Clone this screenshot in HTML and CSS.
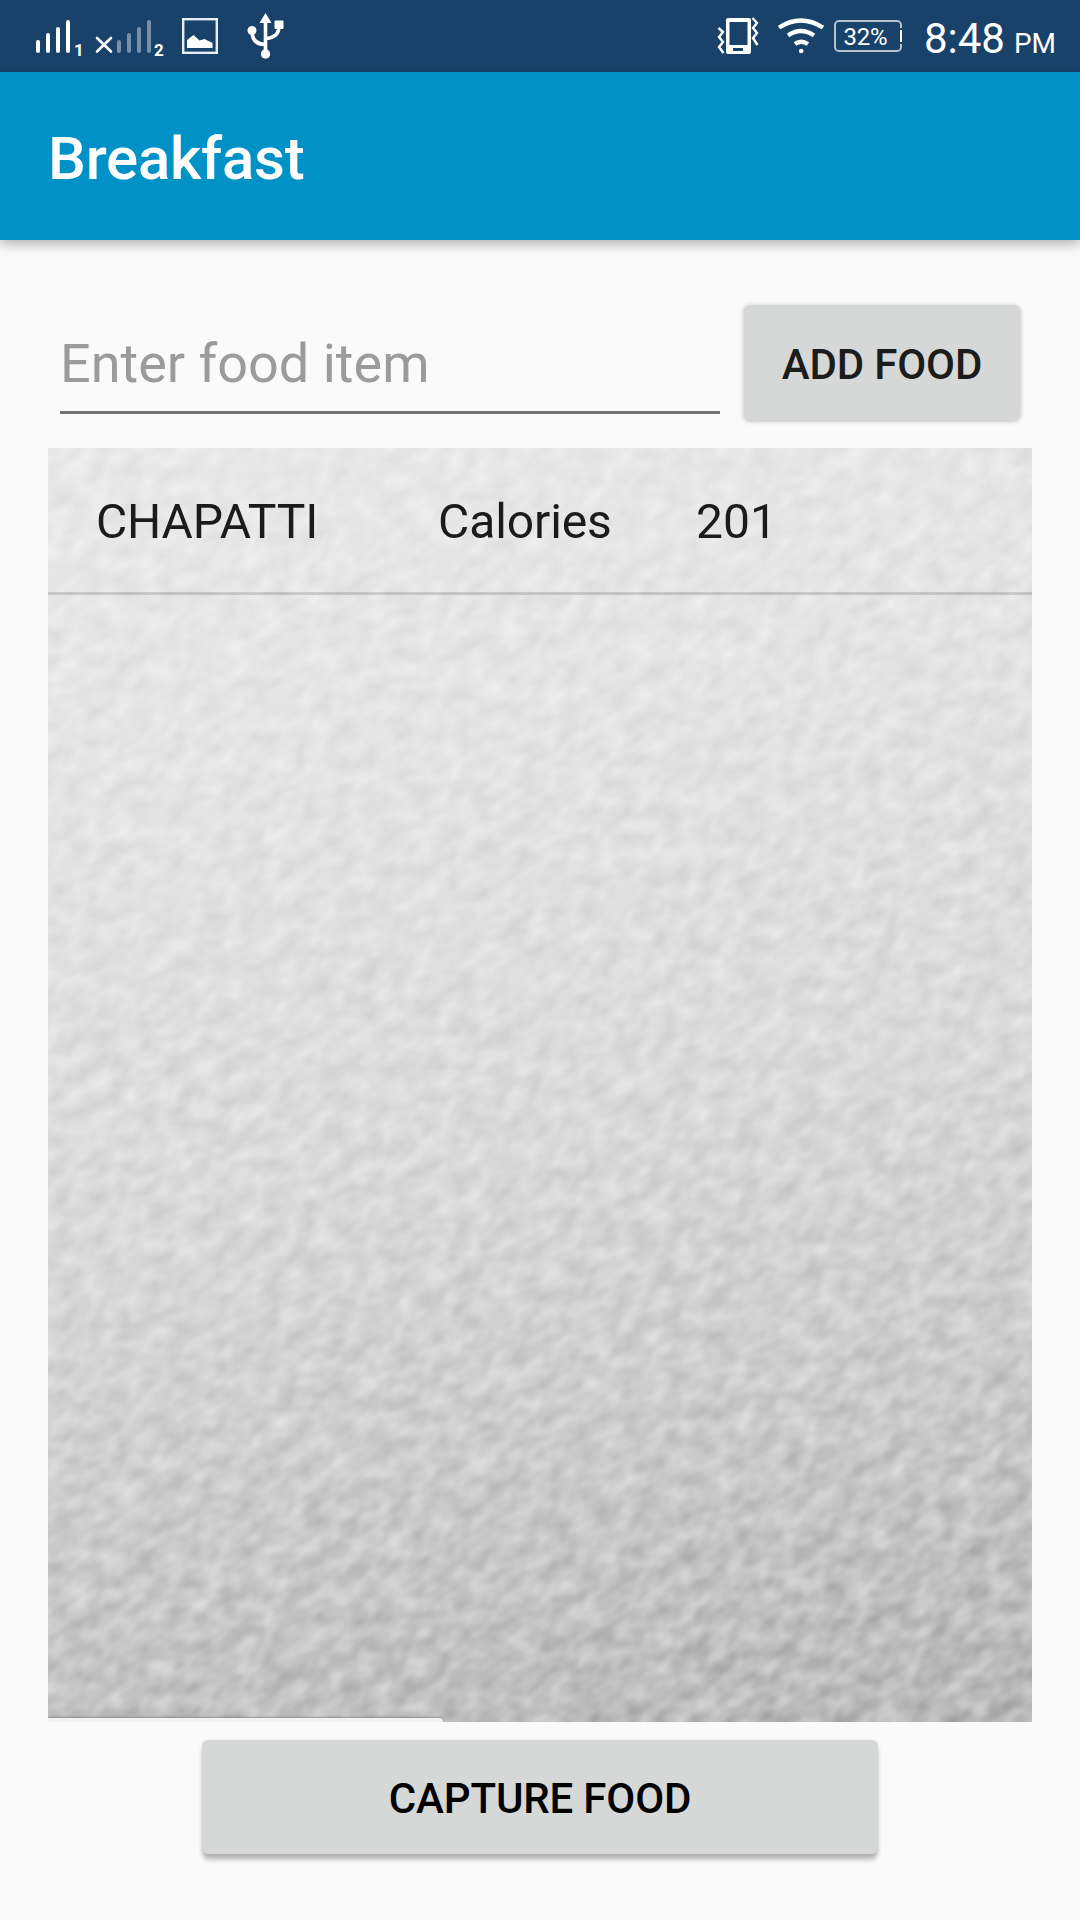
FILE: index.html
```html
<!DOCTYPE html>
<html lang="en">
<head>
<meta charset="utf-8">
<title>Breakfast</title>
<link rel="stylesheet" href="styles.css">
</head>
<body>
<div class="screen">
  <div class="status">
    <svg class="status-icons" width="280" height="72" viewBox="0 0 280 72" fill="none" stroke="#fff" stroke-linecap="round">
      <g stroke-width="4">
        <path d="M18 42V51M28 35V51M38 29V51M48 22V51"/>
        <path stroke="#7690ab" d="M99 42V51M109 35V51M119 29V51M129 22V51"/>
      </g>
      <path stroke-width="2.600" d="M77 38L91 51.500M91 38L77 51.500"/>
      <text class="sim" x="54" y="55.500">1</text>
      <text class="sim" x="134" y="55.500">2</text>
      <rect x="163.200" y="19.200" width="33.600" height="33.600" stroke="#e6eef7" stroke-width="2.400"/>
      <path fill="#fff" stroke="none" d="M167 48V40l6.500-5 6 5.500 5-1.500 8 4V48z"/>
      <g stroke-width="3.600" transform="translate(20 0)">
        <path d="M225.500 20V54M212 31c0 9 5 13.500 13.500 13.500M239 26c0 8-5 12-13.500 12.500"/>
        <path fill="#fff" stroke="none" d="M225.500 13l6 10h-12z"/>
        <circle cx="212" cy="30.500" r="4.500" fill="#fff" stroke="none"/>
        <circle cx="225.500" cy="54" r="4.700" fill="#fff" stroke="none"/>
        <rect x="234.500" y="20.500" width="9" height="8.500" rx="1" fill="#fff" stroke="none"/>
      </g>
    </svg>
    <div class="status-right">
      <svg width="110" height="72" viewBox="0 0 110 72" fill="none" stroke="#fff">
        <path fill="#fff" fill-rule="evenodd" stroke="none" d="M12 18h21q2 0 2 2v32q0 2-2 2H12q-2 0-2-2V20q0-2 2-2zM13.500 22v23h18V22zM17 48v3h10v-3z"/>
        <path stroke-width="2.400" d="M2.500 28l4.500 4-4 5 4 5-4 5 4.500 6M36.500 18l4.500 5-4 5 4 5-4 5 4.500 7"/>
        <path stroke-width="4.200" d="M63 27.500Q84.800 13.500 107 27.500M72 35.500Q84.800 26.500 98 35.500M79 44Q85 39.500 92 44"/>
        <circle cx="85.200" cy="51" r="2.300" fill="#fff" stroke="none"/>
      </svg>
      <div class="battery">32%</div>
      <div class="clock">8:48<span class="ampm">PM</span></div>
    </div>
  </div>
  <header class="app-bar">Breakfast</header>
  <main class="content">
    <div class="entry">
      <input class="food-input" type="text" placeholder="Enter food item">
      <button class="button add">ADD FOOD</button>
    </div>
    <section class="panel">
      <svg class="grain" width="1800" height="1800">
        <filter id="leather" x="0" y="0" width="100%" height="100%" color-interpolation-filters="sRGB">
          <feTurbulence type="fractalNoise" baseFrequency="0.042 0.062" numOctaves="2" seed="7"/>
          <feColorMatrix values="1 0 0 0 0  1 0 0 0 0  1 0 0 0 0  0 0 0 0 1"/>
        </filter>
        <rect width="1800" height="1800" filter="url(#leather)"/>
      </svg>
      <div class="row"><span class="name">CHAPATTI</span><span class="label">Calories</span><span class="value">201</span></div>
      <div class="sheet-edge"></div>
    </section>
    <button class="button capture">CAPTURE FOOD</button>
  </main>
</div>
</body>
</html>
```
FILE: styles.css
```css
* { box-sizing: border-box; }
body { margin: 0; background: #fafafa; font-family: Roboto, sans-serif; }
.screen { width: 1080px; height: 1920px; display: flex; flex-direction: column; overflow: hidden; }

.status { height: 72px; flex: none; display: flex; justify-content: space-between; background: #19426b; color: #fff; }
.status svg { display: block; flex: none; }
.status-icons { margin-left: 20px; }
.status-right { display: flex; align-items: flex-start; padding-right: 24px; }
.sim { font: 700 17px Roboto, sans-serif; fill: #fff; stroke: none; }
.battery {
  position: relative; width: 68px; height: 32px; margin: 20px 0 0 8px; padding-right: 5px;
  border: 2px solid #b3c2d2; border-radius: 5px;
  font-size: 24px; line-height: 31px; letter-spacing: -.2px; text-align: center;
}
.battery::after {
  content: ""; position: absolute; right: -2px; top: 8px; width: 2px; height: 12px;
  background: #fff; border: solid #19426b; border-width: 2px 0; box-sizing: content-box; margin-top: -2px;
}
.clock { margin-left: 22px; font-size: 42px; line-height: 49px; padding-top: 14px; white-space: nowrap; }
.ampm { margin-left: 9px; font-size: 28px; }

.app-bar {
  height: 168px; flex: none; padding: 0 48px; position: relative;
  background: #0091c7; color: #fff; font-size: 60px; font-weight: 500; line-height: 174px; letter-spacing: -.25px;
  box-shadow: 0 4px 12px rgba(0, 0, 0, .3);
}

.content { display: flex; flex-direction: column; padding: 65px 48px 0; }
.entry { display: flex; align-items: flex-start; justify-content: space-between; padding: 0 12px; height: 143px; }
.food-input {
  width: 660px; height: 109px; padding: 11px 0 0; border: 0; border-bottom: 3px solid #727272; border-radius: 0;
  background: none; outline: none; font: 400 54px Roboto, sans-serif; color: #212121;
}
.food-input::placeholder { color: #9b9b9b; opacity: 1; }
.button {
  border: 0; border-radius: 6px; padding: 3px 0 0; background: #d6d8d7;
  font: 500 42px Roboto, sans-serif; letter-spacing: -.15px; text-align: center; white-space: nowrap;
}
.add { width: 276px; height: 115px; color: #1b1c1c; box-shadow: 0 1px 5px rgba(0, 0, 0, .28); }
.capture {
  align-self: center; width: 676px; height: 114px; margin-top: 18px; color: #000;
  box-shadow: 0 7px 4px -1px rgba(0, 0, 0, .22), 0 2px 5px rgba(0, 0, 0, .12);
}

.panel {
  position: relative; isolation: isolate; overflow: hidden; height: 1274px;
  background: linear-gradient(168deg, #e9e9e9 0%, #e4e4e4 25%, #dadada 53%, #c9c9c9 78%, #b7b7b7 100%);
}
.grain {
  position: absolute; left: -400px; top: -260px; transform: rotate(-35deg);
  mix-blend-mode: overlay; opacity: .5; z-index: -1;
}
.row {
  display: flex; height: 147px; padding: 0 48px; border-bottom: 3px solid rgba(0, 0, 0, .14);
  font-size: 48px; line-height: 147px; color: #1b1b1b;
}
.name { width: 342px; letter-spacing: -.15px; }
.label { width: 258px; letter-spacing: -.1px; }
.sheet-edge {
  position: absolute; left: 0; bottom: 0; width: 395px; height: 4px;
  background: #f3f3f3; border-top-right-radius: 6px; box-shadow: 0 -1px 2px rgba(0, 0, 0, .25);
}
```
